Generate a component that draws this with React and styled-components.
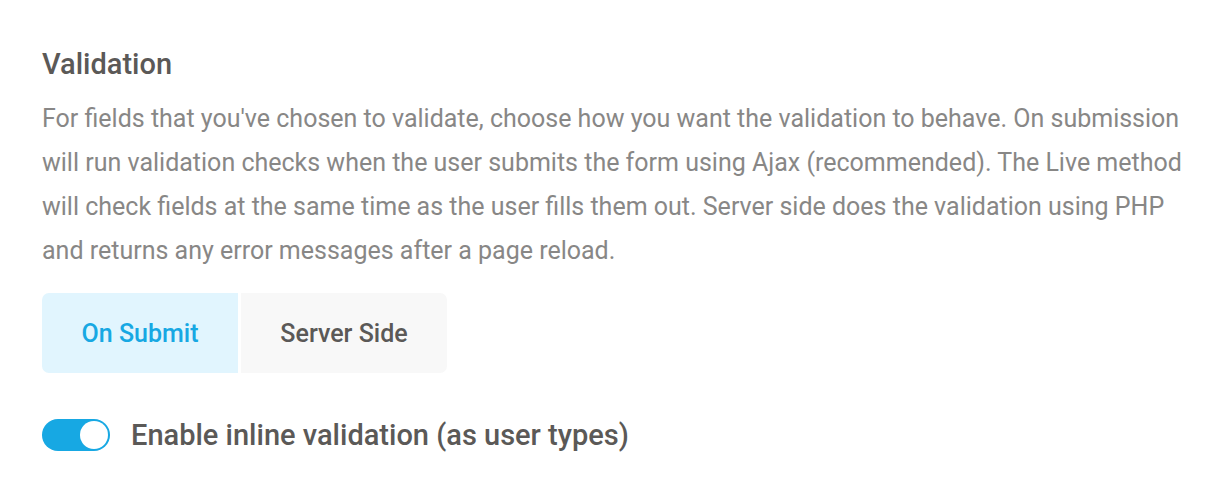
import React, { useState } from "react";
import styled, { createGlobalStyle } from "styled-components";

const Global = createGlobalStyle`
  html, body { margin: 0; padding: 0; background: #fff; }
  body { font-family: Roboto, "Noto Sans", Arial, sans-serif; }
`;

const Section = styled.section`
  padding: 44px 42px 0 42px;
  width: 1145px;
`;

const Title = styled.h2`
  margin: 0;
  font-size: 29px;
  font-weight: 500;
  color: #5b5957;
  line-height: 40px;
`;

const Description = styled.p`
  margin: 13px 0 0 0;
  font-size: 25px;
  line-height: 44px;
  color: #888786;
  font-weight: 400;
`;

const Segmented = styled.div`
  display: inline-flex;
  margin-top: 20px;
  gap: 3px;
  border-radius: 7px;
  overflow: hidden;
`;

const SegButton = styled.button`
  border: none;
  width: ${(p) => p.$w}px;
  height: 80px;
  background: ${(p) => (p.$active ? "#e1f5fe" : "#f8f8f8")};
  color: ${(p) => (p.$active ? "#17a8e3" : "#5b5957")};
  font-family: Roboto, "Noto Sans", Arial, sans-serif;
  font-size: 25px;
  font-weight: 500;
  cursor: pointer;
  padding: 0;
`;

const ToggleRow = styled.label`
  display: flex;
  align-items: center;
  gap: 21px;
  margin-top: 45px;
  cursor: pointer;
`;

const Track = styled.span`
  position: relative;
  width: 68px;
  height: 32px;
  border-radius: 16px;
  background: ${(p) => (p.$on ? "#17a8e3" : "#ccc")};
  flex-shrink: 0;
`;

const Knob = styled.span`
  position: absolute;
  top: 2px;
  left: ${(p) => (p.$on ? "38px" : "2px")};
  width: 28px;
  height: 28px;
  border-radius: 50%;
  background: #fff;
`;

const ToggleLabel = styled.span`
  font-size: 29px;
  font-weight: 500;
  color: #5b5957;
`;

export default function App() {
  const [mode, setMode] = useState("submit");
  const [on, setOn] = useState(true);
  return (
    <>
      <Global />
      <Section>
        <Title>Validation</Title>
        <Description>
          For fields that you've chosen to validate, choose how you want the validation to behave. On submission
          will run validation checks when the user submits the form using Ajax (recommended). The Live method
          will check fields at the same time as the user fills them out. Server side does the validation using PHP
          and returns any error messages after a page reload.
        </Description>
        <Segmented>
          <SegButton $w={196} $active={mode === "submit"} onClick={() => setMode("submit")}>
            On Submit
          </SegButton>
          <SegButton $w={206} $active={mode === "server"} onClick={() => setMode("server")}>
            Server Side
          </SegButton>
        </Segmented>
        <ToggleRow onClick={() => setOn(!on)}>
          <Track $on={on}>
            <Knob $on={on} />
          </Track>
          <ToggleLabel>Enable inline validation (as user types)</ToggleLabel>
        </ToggleRow>
      </Section>
    </>
  );
}
